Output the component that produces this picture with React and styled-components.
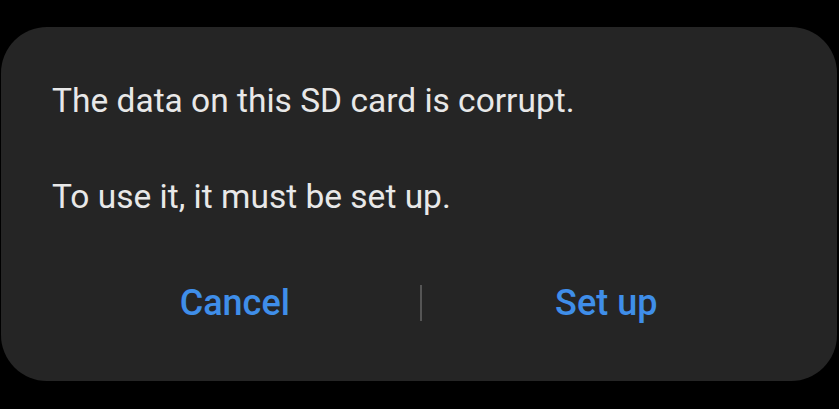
import styled, { createGlobalStyle } from 'styled-components';

const GlobalStyle = createGlobalStyle`
  html, body {
    margin: 0;
    padding: 0;
    background: #000000;
  }
  body {
    font-family: Roboto, 'Noto Sans', sans-serif;
  }
`;

const Screen = styled.div`
  width: 839px;
  height: 409px;
  padding: 27px 2px 28px 1px;
  box-sizing: border-box;
  background: #000000;
`;

const Dialog = styled.div`
  height: 100%;
  background: #252525;
  border-radius: 46px;
  display: flex;
  flex-direction: column;
  padding: 53.5px 46px 0 49px;
  box-sizing: border-box;
`;

const Body = styled.div`
  display: flex;
  flex-direction: column;
  gap: 56px;
  padding-left: 2px;
`;

const Message = styled.p`
  margin: 0;
  font-size: 33.5px;
  line-height: 40px;
  color: #e8e8e8;
`;

const Actions = styled.div`
  display: flex;
  align-items: center;
  margin-top: 66px;
`;

const Action = styled.button`
  flex: 1;
  background: none;
  border: none;
  padding: 0;
  font-family: Roboto, sans-serif;
  font-weight: 500;
  font-size: 36px;
  line-height: 40px;
  color: #3f8ee9;
  cursor: pointer;
`;

const Divider = styled.div`
  width: 2px;
  height: 36px;
  background: #555555;
`;

export default function App() {
  return (
    <>
      <GlobalStyle />
      <Screen>
        <Dialog>
          <Body>
            <Message>The data on this SD card is corrupt.</Message>
            <Message>To use it, it must be set up.</Message>
          </Body>
          <Actions>
            <Action>Cancel</Action>
            <Divider />
            <Action>Set up</Action>
          </Actions>
        </Dialog>
      </Screen>
    </>
  );
}
